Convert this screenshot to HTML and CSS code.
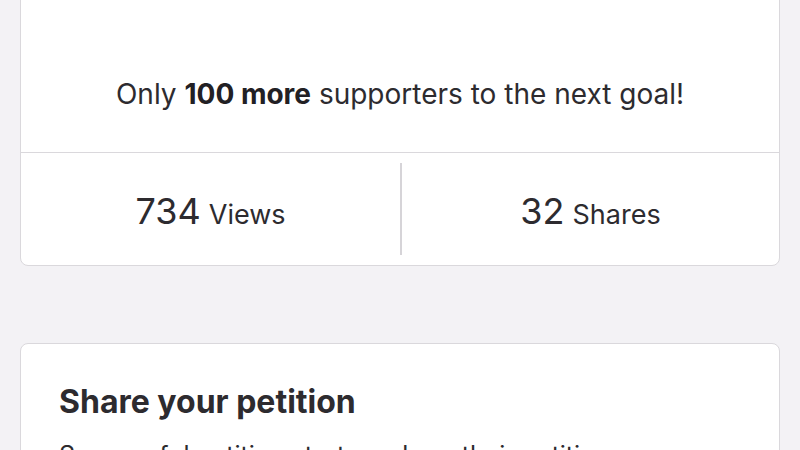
FILE: index.html
```html
<html lang="en">
<head>
	<meta charset="utf-8">
	<meta name="viewport" content="width=device-width, initial-scale=1.0" />
	<title>Petition progress</title>

	<link rel="stylesheet" href="styles.css">
</head>
<body>
	<main class="page">
		<section class="card progress">
			<p class="goal">Only <b>100 more</b> supporters to the next goal!</p>
			<div class="stats">
				<div class="stat"><span class="num">734</span> Views</div>
				<div class="stat"><span class="num">32</span> Shares</div>
			</div>
		</section>

		<section class="card share">
			<h2>Share your petition</h2>
			<p>Successful petition starters share their petition consistently to get more signatures.</p>
		</section>
	</main>
</body>
</html>
```

FILE: styles.css
```css
html {
	font: 16px/1.4 Inter, "Liberation Sans", sans-serif;
}

body {
	margin: 0;
	background: #f3f2f5;
	color: #2d2b2f;
	overflow: hidden;
}

.page {
	display: flex;
	flex-direction: column;
	gap: 77px;
	padding: 0 20px;
}

.card {
	background: #fff;
	border: 1px solid #dad8dc;
	border-radius: 8px;
}

.progress {
	margin-top: -20px;
}

.goal {
	margin: 0;
	padding: 94px 0 38px;
	text-align: center;
	font-size: 28px;
	line-height: 39px;
}

.goal b {
	font-weight: 700;
	color: #222024;
}

.stats {
	display: grid;
	grid-template-columns: 1fr 1fr;
	border-top: 1px solid #dad8dc;
	padding: 10px 0;
}

.stat {
	display: flex;
	align-items: baseline;
	justify-content: center;
	gap: 8px;
	height: 92px;
	padding-top: 30px;
	box-sizing: border-box;
	font-size: 27px;
}

.stat + .stat {
	border-left: 2px solid #d6d4d8;
}

.num {
	font-size: 36px;
	line-height: 1;
}

.share {
	padding: 39px 38px;
}

.share h2 {
	margin: 0 0 17px;
	font-size: 32px;
	font-weight: 700;
	line-height: 1.2;
}

.share p {
	margin: 0;
	font-size: 25px;
}
```
